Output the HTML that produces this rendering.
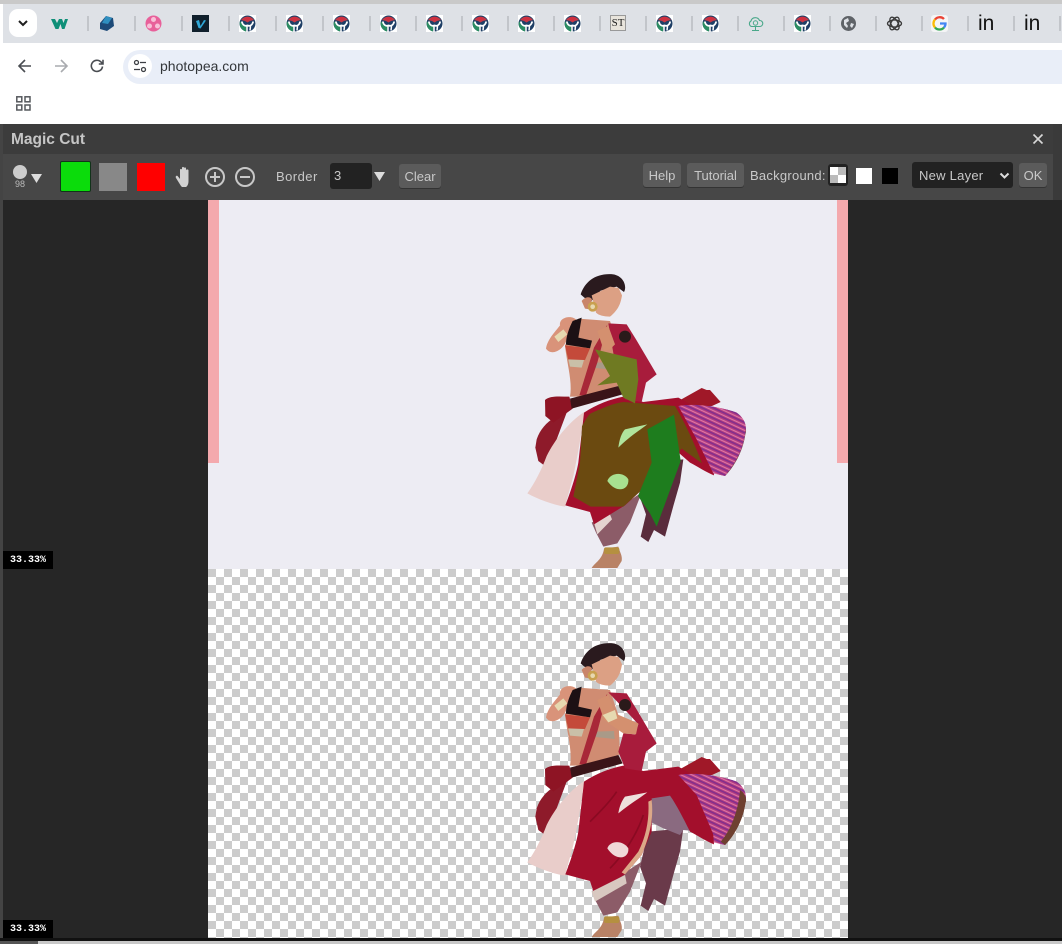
<!DOCTYPE html>
<html><head><meta charset="utf-8"><title>Magic Cut</title>
<style>
html,body{margin:0;padding:0;width:1062px;height:944px;overflow:hidden;background:#fff;font-family:"Liberation Sans",sans-serif}
.a{position:absolute;box-sizing:border-box}
.sep{position:absolute;top:16px;width:1.5px;height:15px;background:#c2c5ca}
.fav{position:absolute;top:15px;width:17px;height:17px}
.btn{position:absolute;background:#5b5b5b;border-radius:3px;color:#c8c8c8;font-size:13px;text-align:center;line-height:26px;height:24px;top:163px;box-shadow:0 1px 0 #333}
.lbl{position:absolute;color:#c8c8c8;font-size:13px;line-height:16px;letter-spacing:.25px}
.zoom{position:absolute;left:3px;width:50px;height:18px;background:#000;color:#fff;font:bold 10px/19px "Liberation Mono",monospace;padding-left:7px;box-sizing:border-box}
.chk{background-color:#fff;background-image:conic-gradient(#fff 25%,#ccc 0 50%,#fff 0 75%,#ccc 0);background-size:16px 16px}
.dancer{filter:blur(.35px)}
</style></head><body>
<svg width="0" height="0" style="position:absolute">
<defs>
<symbol id="f" viewBox="0 0 17 17">
<rect width="17" height="17" fill="#fff"/>
<circle cx="8.500" cy="8.500" r="8" fill="#1e3f66"/>
<path d="M1 6.500A8 8 0 0 0 7 16.500L7.500 12 5 9.500Z" fill="#2a8c62"/>
<path d="M2 5A8 8 0 0 1 15 5L11 6 8.500 7.500 6 6Z" fill="#c23a48"/>
<path d="M2.800 6.500C3.500 10 6 11.500 8.500 10.500 11 11.500 13.500 10 14.200 6.500" fill="none" stroke="#fff" stroke-width="1.800"/>
<path d="M8 11V16.500M11.500 11 11 15.500" stroke="#fff" stroke-width="1.500"/>
<ellipse cx="8.500" cy="3.800" rx="3.500" ry="1.800" fill="#d03040"/>
</symbol>
<pattern id="st" width="14" height="14" patternUnits="userSpaceOnUse" patternTransform="rotate(25)">
<rect width="14" height="14" fill="#b43a80"/><rect width="14" height="4" fill="#7d2f8e"/><rect y="8" width="14" height="3" fill="#e080a8"/>
</pattern>
<g id="upper">
<path d="M80 520C90 490 110 470 132 455L170 440 140 520 105 600 85 585 76 545Z" fill="#8e1a2a"/>
<path d="M105 402C120 388 150 392 178 392L188 428 130 470 106 450Z" fill="#8e1424"/>
<path d="M222 438C215 500 205 560 190 630L165 722C125 715 85 700 52 682 75 650 95 610 110 570 135 520 175 470 222 438Z" fill="#e9cdca"/>
<path d="M500 408 575 366 590 372 600 372 632 408 606 420 520 424Z" fill="#a01828"/>
<path d="M282 848 325 842C330 860 338 870 335 885L322 906H245C255 890 278 880 282 848Z" fill="#b98266"/>
<rect x="282" y="844" width="46" height="20" rx="6" fill="#b59040"/>
<path d="M108 248C112 220 135 198 150 178 146 152 190 145 202 165 204 188 178 200 170 222 160 252 125 272 108 248Z" fill="#d9937a"/>
<path d="M133 212 160 190 172 205 145 228Z" fill="#e6d9b0"/>
<path d="M205 158 300 165 325 240 330 358 222 392 180 392C188 345 170 290 165 238Z" fill="#d08c72"/>
<path d="M188 165 215 155 205 215 246 224 240 247 168 236C168 210 178 185 188 165Z" fill="#1c1014"/>
<path d="M165 238 240 247 225 282 175 282Z" fill="#c44a3a"/>
<path d="M175 280 222 282 215 305 180 302Z" fill="#c9c0a8"/>
<path d="M256 290 312 288 314 312 256 306Z" fill="#a99a88"/>
<path d="M208 388 252 245 292 176 262 290 228 388Z" fill="#a82838"/>
<path d="M212 85C225 45 260 20 310 25 340 30 352 60 342 78L320 62 272 74 242 108 222 94Z" fill="#2a1a1e"/>
<path d="M215 105C225 92 240 90 246 100L240 130 225 128Z" fill="#c9856a"/>
<path d="M245 88 300 62 326 66 336 88C332 112 326 130 300 152 282 152 265 148 258 140Z" fill="#dca084"/>
<circle cx="248" cy="122" r="15" fill="#c9a050"/><circle cx="248" cy="122" r="7" fill="#e8d8b0"/>
</g>
</defs>
</svg>

<!-- browser chrome -->
<div class="a" style="left:0;top:0;width:1062px;height:4px;background:#c9c9c9"></div>
<div class="a" style="left:3px;top:4px;width:1059px;height:39px;background:#dee1e6"></div>
<div class="a" style="left:9px;top:9px;width:28px;height:28px;background:#fff;border-radius:9px"></div>
<svg class="a" style="left:16px;top:19px" width="14" height="9" viewBox="0 0 14 9"><path d="M3 2 7 6 11 2" fill="none" stroke="#1f1f1f" stroke-width="2"/></svg>

<div class="sep" style="left:87px"></div><div class="sep" style="left:134px"></div><div class="sep" style="left:181px"></div><div class="sep" style="left:228px"></div><div class="sep" style="left:275px"></div><div class="sep" style="left:322px"></div><div class="sep" style="left:369px"></div><div class="sep" style="left:415px"></div><div class="sep" style="left:461px"></div><div class="sep" style="left:507px"></div><div class="sep" style="left:553px"></div><div class="sep" style="left:599px"></div><div class="sep" style="left:645px"></div><div class="sep" style="left:691px"></div><div class="sep" style="left:737px"></div><div class="sep" style="left:783px"></div><div class="sep" style="left:829px"></div><div class="sep" style="left:875px"></div><div class="sep" style="left:921px"></div><div class="sep" style="left:967px"></div><div class="sep" style="left:1013px"></div><div class="sep" style="left:1059px"></div>

<svg class="fav" style="left:51px" viewBox="0 0 17 17"><path d="M0 4 4 4 6 8 8 4 11 4 12.500 8 14 4 17 4 13.500 14 11 14 9.500 9 7.500 14 4.500 14Z" fill="#0f8f78"/></svg>
<svg class="fav" style="left:98px" viewBox="0 0 17 17"><path d="M8 1 15 3 16 11 9 16 2 14 2 8Z" fill="#1d4a78"/><path d="M8 1 14 3 10 9 4 8Z" fill="#2f8fc0"/></svg>
<svg class="fav" style="left:145px" viewBox="0 0 17 17"><circle cx="8.500" cy="8.500" r="8" fill="#e8609a"/><circle cx="8.500" cy="4.500" r="2.500" fill="#f8c0d8"/><circle cx="4.500" cy="11" r="2.500" fill="#f8c0d8"/><circle cx="12.500" cy="11" r="2.500" fill="#f8c0d8"/></svg>
<svg class="fav" style="left:192px" viewBox="0 0 17 17"><rect width="17" height="17" fill="#10202c"/><path d="M4 6 7 5 8.500 11 12 5 14 5.500 8.500 13.500 6.500 13Z" fill="#2fa8d8"/></svg>
<svg class="fav" style="left:239px"><use href="#f"/></svg>
<svg class="fav" style="left:286px"><use href="#f"/></svg>
<svg class="fav" style="left:333px"><use href="#f"/></svg>
<svg class="fav" style="left:380px"><use href="#f"/></svg>
<svg class="fav" style="left:426px"><use href="#f"/></svg>
<svg class="fav" style="left:472px"><use href="#f"/></svg>
<svg class="fav" style="left:518px"><use href="#f"/></svg>
<svg class="fav" style="left:564px"><use href="#f"/></svg>
<div class="fav" style="left:610px;width:16px;height:16px;background:#e8e4dc;border:1px solid #999;box-sizing:border-box;font:11px/14px 'Liberation Serif',serif;color:#222;text-align:center">ST</div>
<svg class="fav" style="left:656px"><use href="#f"/></svg>
<svg class="fav" style="left:702px"><use href="#f"/></svg>
<svg class="fav" style="left:747px" viewBox="0 0 17 17"><path d="M4.500 11.500A3 3 0 0 1 4 6 4.500 4.500 0 0 1 12.500 5.500 3 3 0 0 1 13 11.500Z" fill="none" stroke="#4aa88a" stroke-width="1.100"/><circle cx="8.500" cy="8" r="2.200" fill="none" stroke="#4aa88a"/><path d="M8.500 11V15M5 15.500H12" stroke="#4aa88a"/></svg>
<svg class="fav" style="left:794px"><use href="#f"/></svg>
<svg class="fav" style="left:840px" viewBox="0 0 17 17"><circle cx="8.500" cy="8.500" r="7.500" fill="#5f6368"/><path d="M4 5 8 3 9 6 6 8 8 11 7 13 4 10ZM11 8 14 9 12 13 10 11Z" fill="#dee1e6"/></svg>
<svg class="fav" style="left:886px" viewBox="0 0 17 17"><g fill="none" stroke="#3a3a3a" stroke-width="1.300"><ellipse cx="8.500" cy="8.500" rx="7" ry="3.500"/><ellipse cx="8.500" cy="8.500" rx="7" ry="3.500" transform="rotate(60 8.500 8.500)"/><ellipse cx="8.500" cy="8.500" rx="7" ry="3.500" transform="rotate(120 8.500 8.500)"/></g></svg>
<svg class="fav" style="left:931px" viewBox="0 0 17 17"><rect width="17" height="17" rx="3" fill="#f4f5f6"/><g fill="none" stroke-width="2.300"><path d="M13 4A6 6 0 0 0 4 4.500" stroke="#ea4335"/><path d="M4 4.500A6 6 0 0 0 4 12.500" stroke="#fbbc05"/><path d="M4 12.500A6 6 0 0 0 13 12.500" stroke="#34a853"/><path d="M13 12.500A6 6 0 0 0 14.500 8.500H9" stroke="#4285f4"/></g></svg>
<div class="fav" style="left:978px;top:14px;width:20px;height:20px;font:21px/20px 'Liberation Sans',sans-serif;color:#111">in</div>
<div class="fav" style="left:1024px;top:14px;width:20px;height:20px;font:21px/20px 'Liberation Sans',sans-serif;color:#111">in</div>

<div class="a" style="left:3px;top:43px;width:1059px;height:81px;background:#fff"></div>
<svg class="a" style="left:16px;top:57px" width="18" height="18" viewBox="0 0 18 18"><path d="M15 9H3.500M9 3 3 9 9 15" fill="none" stroke="#4a4d52" stroke-width="1.600"/></svg>
<svg class="a" style="left:52px;top:57px" width="18" height="18" viewBox="0 0 18 18"><path d="M3 9H14.500M9 3 15 9 9 15" fill="none" stroke="#a9abaf" stroke-width="1.600"/></svg>
<svg class="a" style="left:88px;top:57px" width="18" height="18" viewBox="0 0 18 18"><path d="M14.500 9.500A5.600 5.600 0 1 1 13 5L15 7M15 2.800V7H10.800" fill="none" stroke="#4a4d52" stroke-width="1.600"/></svg>
<div class="a" style="left:123px;top:50px;width:939px;height:34px;background:#e9eef8;border-radius:17px 0 0 17px"></div>
<div class="a" style="left:128px;top:54px;width:24px;height:24px;background:#fff;border-radius:50%"></div>
<svg class="a" style="left:133px;top:59px" width="14" height="14" viewBox="0 0 14 14"><g fill="none" stroke="#3c3f44" stroke-width="1.300"><circle cx="3.500" cy="3.500" r="2"/><path d="M7 3.500H13M1 10.500H7"/><circle cx="10.500" cy="10.500" r="2"/></g></svg>
<div class="a" style="left:160px;top:58px;font-size:14px;line-height:17px;color:#33363a">photopea.com</div>
<svg class="a" style="left:16px;top:96px" width="15" height="15" viewBox="0 0 15 15"><g fill="none" stroke="#55585d" stroke-width="1.500"><rect x=".8" y=".8" width="5" height="5"/><rect x="9" y=".8" width="5" height="5"/><rect x=".8" y="9" width="5" height="5"/><rect x="9" y="9" width="5" height="5"/></g></svg>

<!-- modal -->
<div class="a" style="left:0;top:124px;width:1062px;height:814px;background:#262626"></div>
<div class="a" style="left:0;top:124px;width:3px;height:814px;background:#444"></div>
<div class="a" style="left:3px;top:124px;width:1050px;height:30px;background:#3c3c3c"></div>
<div class="a" style="left:3px;top:154px;width:1050px;height:46px;background:#474747"></div>
<div class="a" style="left:1053px;top:124px;width:9px;height:76px;background:#3a3a3a"></div>
<div class="a" style="left:11px;top:131px;font-size:15.500px;font-weight:bold;line-height:18px;color:#c6c6c6">Magic Cut</div>
<svg class="a" style="left:1032px;top:133px" width="12" height="12" viewBox="0 0 12 12"><path d="M1.500 1.500 10.500 10.500M10.500 1.500 1.500 10.500" stroke="#d8d8d8" stroke-width="1.600"/></svg>

<div class="a" style="left:13px;top:165px;width:14px;height:14px;border-radius:50%;background:#ccc"></div>
<div class="a" style="left:13px;top:179px;width:14px;font-size:9px;line-height:10px;color:#bbb;text-align:center">98</div>
<svg class="a" style="left:31px;top:174px" width="11" height="9"><path d="M0 0H11L5.500 9Z" fill="#ddd"/></svg>
<div class="a" style="left:60px;top:161px;width:31px;height:31px;background:#0bdc0b;border:1.500px solid #12331a;border-radius:2px"></div>
<div class="a" style="left:99px;top:163px;width:28px;height:28px;background:#888"></div>
<div class="a" style="left:137px;top:163px;width:28px;height:28px;background:#f00"></div>
<svg class="a" style="left:175px;top:166px" width="18" height="22" viewBox="0 0 18 22"><path d="M6 20 1 12C0 10 2 9 3 10.500L5 13V4C5 2.500 7 2.500 7 4V9V2C7 .5 9 .5 9 2V9V2.500C9 1 11 1 11 2.500V9.500V4.500C11 3 13.500 3 13.500 4.500V15C13.500 18 12.500 20 11 21H7Z" fill="#d2d2d2"/></svg>
<svg class="a" style="left:204px;top:166px" width="22" height="22" viewBox="0 0 22 22"><circle cx="11" cy="11" r="9" fill="none" stroke="#c8c8c8" stroke-width="2"/><path d="M6 11H16M11 6V16" stroke="#c8c8c8" stroke-width="2"/></svg>
<svg class="a" style="left:234px;top:166px" width="22" height="22" viewBox="0 0 22 22"><circle cx="11" cy="11" r="9" fill="none" stroke="#c8c8c8" stroke-width="2"/><path d="M6 11H16" stroke="#c8c8c8" stroke-width="2"/></svg>
<div class="lbl" style="left:276px;top:169px;letter-spacing:.45px">Border</div>
<div class="a" style="left:330px;top:163px;width:42px;height:26px;background:#222;border-radius:3px;color:#c8c8c8;font-size:13px;line-height:26px;padding-left:4px">3</div>
<svg class="a" style="left:374px;top:172px" width="11" height="9"><path d="M0 0H11L5.500 9Z" fill="#ddd"/></svg>
<div class="btn" style="left:399px;width:42px;top:164px">Clear</div>
<div class="btn" style="left:643px;width:38px">Help</div>
<div class="btn" style="left:687px;width:57px">Tutorial</div>
<div class="lbl" style="left:750px;top:168px">Background:</div>
<div class="a" style="left:828px;top:164px;width:20px;height:22px;background:#222;border-radius:3px"></div>
<div class="a" style="left:830px;top:167px;width:16px;height:16px;background:conic-gradient(#bbb 25%,#fff 0 50%,#bbb 0 75%,#fff 0)"></div>
<div class="a" style="left:856px;top:168px;width:16px;height:16px;background:#fff"></div>
<div class="a" style="left:882px;top:168px;width:16px;height:16px;background:#000"></div>
<div class="a" style="left:912px;top:162px;width:101px;height:26px;background:#222;border-radius:3px;color:#c8c8c8;font-size:13px;line-height:27px;padding-left:7px;letter-spacing:.25px">New Layer</div>
<svg class="a" style="left:999px;top:172px" width="11" height="7" viewBox="0 0 11 7"><path d="M1.500 1.500 5.500 5.500 9.500 1.500" fill="none" stroke="#ddd" stroke-width="2"/></svg>
<div class="btn" style="left:1019px;width:28px">OK</div>

<!-- canvases -->
<div class="a" style="left:208px;top:200px;width:640px;height:369px;background:#edecf3"></div>
<div class="a" style="left:208px;top:200px;width:11px;height:263px;background:#f4a9ad"></div>
<div class="a" style="left:837px;top:200px;width:11px;height:263px;background:#f4a9ad"></div>
<div class="a chk" style="left:208px;top:569px;width:640px;height:369px"></div>

<!-- top dancer -->
<svg class="a dancer" style="left:510px;top:266px" width="250" height="303" viewBox="0 0 750 909">
<path d="M415 590 520 580 510 650 490 720 465 812 432 792 415 828 392 812 408 745 390 695Z" fill="#5a2c3c"/>
<path d="M245 770 340 715 395 680 360 770 322 832 280 842 258 800Z" fill="#8c5c68"/>
<path d="M252 770 300 745 306 760 262 805Z" fill="#e4d4d0"/>
<path d="M505 420C560 410 640 425 680 440 700 455 712 475 706 500 698 560 670 600 645 630L610 622 560 520Z" fill="url(#st)"/>
<path d="M690 465C705 475 712 490 706 505 698 560 670 605 645 630L632 620C660 590 685 530 690 465Z" fill="#6e4030"/>
<use href="#upper"/>
<path d="M222 440C260 415 300 400 340 392L400 408 505 395 560 425 600 480 612 628C590 620 560 600 540 590L500 555 430 640 345 718 252 775 240 738 166 718C185 670 200 620 205 590Z" fill="#a30f2c"/>
<path d="M505 420C560 410 640 425 680 440 700 455 712 475 706 500 698 560 670 600 645 630L610 622 560 520Z" fill="url(#st)"/>
<path d="M180 398 325 360 338 385 185 428Z" fill="#3a1418"/>
<path d="M295 172 350 175 378 220 440 325 408 350 395 408 345 400 325 350Z" fill="#a81c3c"/>
<circle cx="345" cy="212" r="18" fill="#2a1a1a"/>
<path d="M216 480C225 465 232 450 242 442 280 425 310 412 340 408L495 420C525 470 552 530 576 592L515 548 430 640 340 722H242L190 692 210 590Z" fill="#6b4a10"/>
<path d="M412 490 492 446 512 585 440 782 420 742 384 690 425 590Z" fill="#1e7d1e"/>
<path d="M255 250 380 280 385 340 375 412 340 395 320 350 262 358 300 330Z" fill="#6f7a22"/>
<path d="M262 195 295 180 315 235 300 250 282 255Z" fill="#d4906f"/>
<path d="M325 545C328 520 335 500 345 490L412 475C385 495 355 515 325 545Z" fill="#b0e49c"/>
<path d="M292 645C300 620 340 615 355 640 358 672 320 685 292 645Z" fill="#a8e090"/>
</svg>

<!-- bottom dancer -->
<svg class="a dancer" style="left:510px;top:635px" width="250" height="309" viewBox="0 0 750 927">
<path d="M415 590 520 580 510 650 490 720 465 812 432 792 415 828 392 812 408 745 390 695Z" fill="#6a3a4a"/>
<path d="M245 770 340 715 395 680 360 770 322 832 280 842 258 800Z" fill="#8c5c68"/>
<path d="M505 420C560 410 640 425 680 440 700 455 712 475 706 500 698 560 670 600 645 630L610 622 560 520Z" fill="url(#st)"/>
<path d="M690 465C705 475 712 490 706 505 698 560 670 605 645 630L632 620C660 590 685 530 690 465Z" fill="#6e4030"/>
<use href="#upper"/>
<path d="M415 490 475 470 570 590 520 585 510 600 460 580 420 560Z" fill="#8a6a80"/>
<path d="M222 440C260 415 300 400 340 392L400 408 505 395 560 425 600 480 612 628C590 620 560 600 540 590 520 550 500 510 480 482L425 490 425 590 395 660 345 718 252 775 240 738 166 718C185 670 200 620 205 590Z" fill="#a30f2c"/>
<path d="M505 420C560 410 640 425 680 440 700 455 712 475 706 500 698 560 670 600 645 630L620 622 560 480Z" fill="url(#st)"/>
<path d="M690 465C705 475 712 490 706 505 698 560 670 605 645 630L632 620C660 590 685 530 690 465Z" fill="#6e4030"/>
<path d="M180 398 325 360 338 385 185 428Z" fill="#3a1418"/>
<path d="M425 495C430 540 425 590 395 660L345 718 335 712 385 650C410 600 418 550 415 500Z" fill="#dba888"/>
<path d="M295 172 350 175 378 220 440 325 408 350 395 408 345 400 325 350 340 295 375 298 385 268 350 230Z" fill="#a81c3c"/>
<circle cx="345" cy="210" r="18" fill="#2a1a1a"/>
<path d="M262 195 295 180 315 235 385 265 378 298 340 295 282 255Z" fill="#d4906f"/>
<path d="M278 240 315 225 322 250 295 262Z" fill="#e6d9b0"/>
<path d="M240 560C270 530 300 500 320 470M300 700C340 660 380 600 400 540" fill="none" stroke="#8a0a22" stroke-width="5"/>
<path d="M325 535C328 515 335 498 345 485L412 472C385 492 355 510 325 535Z" fill="#eee0dc"/>
<path d="M292 640C300 615 340 615 355 640 358 670 320 682 292 640Z" fill="#f0d8d8"/>
<path d="M245 770 345 720 350 745 255 800Z" fill="#d8c8c0"/>
</svg>

<div class="zoom" style="top:551px">33.33%</div>
<div class="zoom" style="top:920px">33.33%</div>

<div class="a" style="left:0;top:938px;width:1062px;height:3px;background:#111"></div>
<div class="a" style="left:0;top:941px;width:38px;height:3px;background:#555"></div>
<div class="a" style="left:38px;top:941px;width:1024px;height:3px;background:#c8c8c8"></div>
</body></html>
